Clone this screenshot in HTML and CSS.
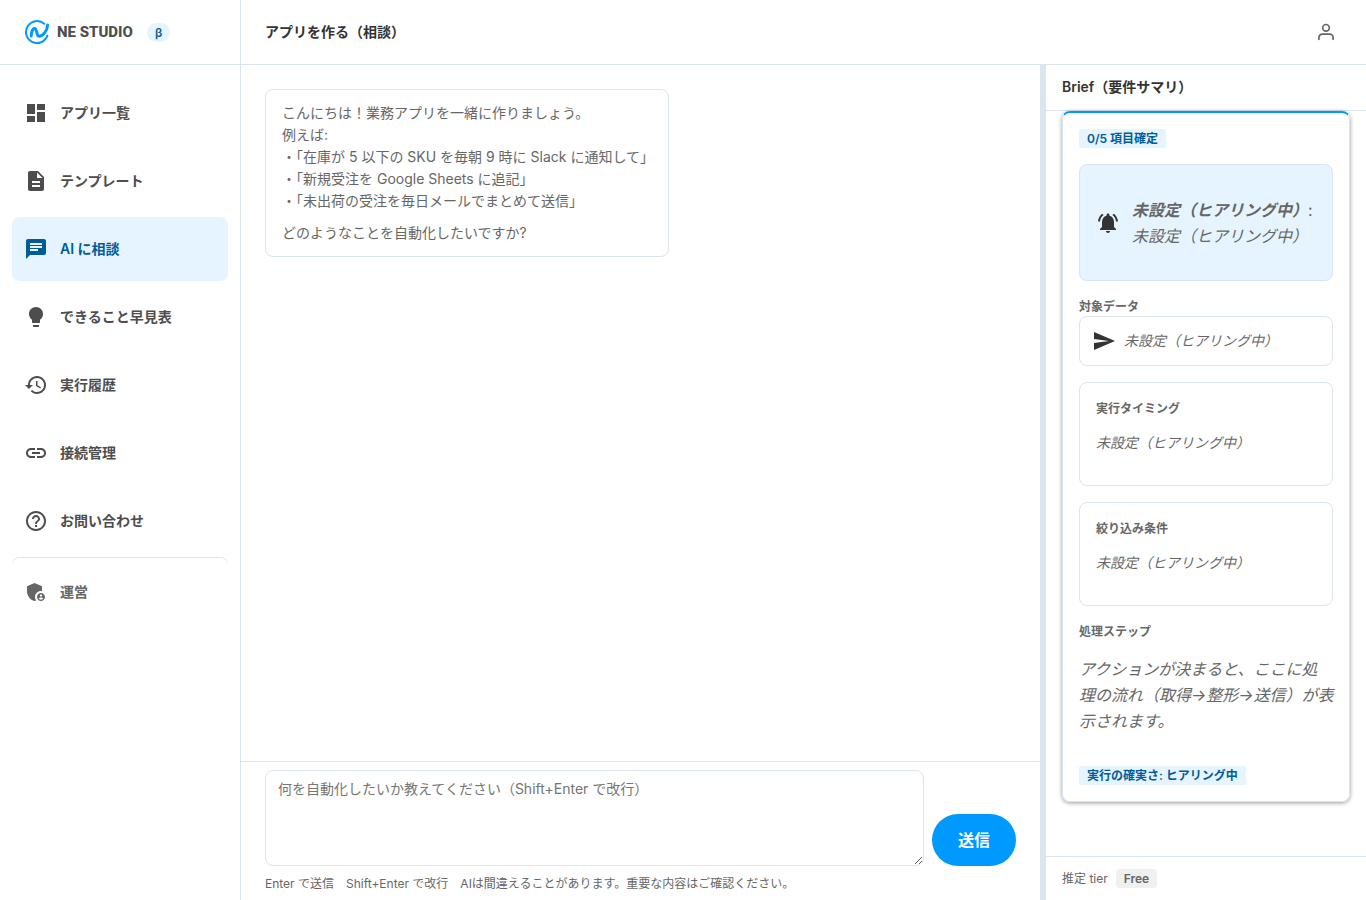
FILE: index.html
```html
<!DOCTYPE html>
<html lang="ja">
<head>
<meta charset="utf-8">
<meta name="viewport" content="width=device-width, initial-scale=1">
<title>NE STUDIO</title>
<link rel="stylesheet" href="styles.css">
</head>
<body>
<div class="app">
  <aside class="sidebar">
    <div class="brand">
      <svg class="brand-mark" viewBox="-1 -1 26 26" aria-hidden="true">
        <path d="M19.300 3.800A11 11 0 1 0 22.400 15.700" />
        <path class="brand-wave" d="M6.200 16C6.200 12.500 7.600 8.400 9.600 8.400C12.400 8.400 11 16.300 14.200 16.300C17.600 16.300 22.300 11 22.600 5" />
      </svg>
      <span class="brand-name">NE STUDIO</span>
      <span class="beta">β</span>
    </div>
    <nav class="nav">
      <a class="nav-item" href="#"><svg class="icon" viewBox="0 0 24 24"><path d="M3 13h8V3H3v10zm0 8h8v-6H3v6zm10 0h8V11h-8v10zm0-18v6h8V3h-8z"/></svg>アプリ一覧</a>
      <a class="nav-item" href="#"><svg class="icon" viewBox="0 0 24 24"><path d="M14 2H6c-1.100 0-2 .9-2 2v16c0 1.100.9 2 2 2h12c1.100 0 2-.9 2-2V8l-6-6zm2 16H8v-2h8v2zm0-4H8v-2h8v2zm-3-5V3.500L18.500 9H13z"/></svg>テンプレート</a>
      <a class="nav-item nav-active" href="#" aria-current="page"><svg class="icon" viewBox="0 0 24 24"><path d="M20 2H4c-1.100 0-2 .9-2 2v18l4-4h14c1.100 0 2-.9 2-2V4c0-1.100-.9-2-2-2zM6 9h12v2H6V9zm8 5H6v-2h8v2zm4-6H6V6h12v2z"/></svg>AI に相談</a>
      <a class="nav-item" href="#"><svg class="icon" viewBox="0 0 24 24"><path d="M9 21c0 .55.45 1 1 1h4c.55 0 1-.45 1-1v-1H9v1zm3-19C8.140 2 5 5.140 5 9c0 2.380 1.190 4.470 3 5.740V17c0 .55.45 1 1 1h6c.55 0 1-.45 1-1v-2.260c1.810-1.270 3-3.360 3-5.740 0-3.860-3.140-7-7-7z"/></svg>できること早見表</a>
      <a class="nav-item" href="#"><svg class="icon" viewBox="0 0 24 24"><path d="M13 3c-4.970 0-9 4.030-9 9H1l3.890 3.890.07.14L9 12H6c0-3.870 3.130-7 7-7s7 3.130 7 7-3.130 7-7 7c-1.930 0-3.680-.79-4.940-2.060l-1.420 1.420C8.270 19.990 10.510 21 13 21c4.970 0 9-4.030 9-9s-4.030-9-9-9zm-1 5v5l4.280 2.540.72-1.210-3.500-2.080V8H12z"/></svg>実行履歴</a>
      <a class="nav-item" href="#"><svg class="icon" viewBox="0 0 24 24"><path d="M3.900 12c0-1.710 1.390-3.100 3.100-3.100h4V7H7c-2.760 0-5 2.240-5 5s2.240 5 5 5h4v-1.900H7c-1.710 0-3.100-1.390-3.100-3.100zM8 13h8v-2H8v2zm9-6h-4v1.900h4c1.710 0 3.100 1.390 3.100 3.100s-1.390 3.100-3.100 3.100h-4V17h4c2.760 0 5-2.240 5-5s-2.240-5-5-5z"/></svg>接続管理</a>
      <a class="nav-item" href="#"><svg class="icon" viewBox="0 0 24 24"><path d="M11 18h2v-2h-2v2zm1-16C6.480 2 2 6.480 2 12s4.480 10 10 10 10-4.480 10-10S17.520 2 12 2zm0 18c-4.410 0-8-3.590-8-8s3.590-8 8-8 8 3.590 8 8-3.590 8-8 8zm0-14c-2.210 0-4 1.790-4 4h2c0-1.100.9-2 2-2s2 .9 2 2c0 2-3 1.750-3 5h2c0-2.250 3-2.500 3-5 0-2.210-1.790-4-4-4z"/></svg>お問い合わせ</a>
      <a class="nav-item nav-admin" href="#"><svg class="icon" viewBox="0 0 24 24"><path d="M17 11c.34 0 .67.04 1 .09V6.270L10.500 3 3 6.270v4.910c0 4.540 3.200 8.790 7.500 9.820.55-.13 1.080-.32 1.600-.55-.69-.98-1.100-2.170-1.100-3.450 0-3.310 2.690-6 6-6z"/><path fill-rule="evenodd" d="M17 13c-2.210 0-4 1.790-4 4s1.790 4 4 4 4-1.790 4-4-1.790-4-4-4zm0 1.380c.62 0 1.120.51 1.120 1.120s-.51 1.120-1.120 1.120-1.120-.51-1.120-1.120.5-1.120 1.120-1.120zm0 5.370c-.93 0-1.740-.46-2.240-1.170.05-.72 1.510-1.080 2.240-1.080s2.190.36 2.240 1.080c-.5.71-1.310 1.170-2.240 1.170z"/></svg>運営</a>
    </nav>
  </aside>

  <div class="content">
    <header class="topbar">
      <h1 class="page-title">アプリを作る（相談）</h1>
      <button class="account" type="button" aria-label="アカウント">
        <svg class="account-icon" viewBox="0 0 24 24"><circle cx="12" cy="7" r="4"/><path d="M3.500 21v-2.500a4 4 0 0 1 4-4h9a4 4 0 0 1 4 4V21"/></svg>
      </button>
    </header>
    <div class="workspace">
      <main class="chat">
        <div class="messages">
          <div class="bubble">
            <p>こんにちは！業務アプリを一緒に作りましょう。<br>例えば:<br>・「在庫が 5 以下の SKU を毎朝 9 時に Slack に通知して」<br>・「新規受注を Google Sheets に追記」<br>・「未出荷の受注を毎日メールでまとめて送信」</p>
            <p>どのようなことを自動化したいですか?</p>
          </div>
        </div>
        <form class="composer">
          <div class="composer-row">
            <textarea class="composer-input" aria-label="メッセージ" placeholder="何を自動化したいか教えてください（Shift+Enter で改行）"></textarea>
            <button class="send" type="button">送信</button>
          </div>
          <p class="hint">Enter で送信　Shift+Enter で改行　AIは間違えることがあります。重要な内容はご確認ください。</p>
        </form>
      </main>

      <aside class="brief">
        <h2 class="brief-title">Brief（要件サマリ）</h2>
        <div class="brief-body">
          <section class="summary">
            <span class="tag">0/5 項目確定</span>
            <div class="trigger">
              <svg class="icon" viewBox="0 0 24 24"><path d="M7.580 4.080L6.150 2.650C3.750 4.480 2.170 7.300 2.030 10.500h2c.15-2.650 1.510-4.970 3.550-6.420zm12.390 6.420h2c-.15-3.200-1.730-6.020-4.120-7.850l-1.420 1.430c2.020 1.450 3.390 3.770 3.540 6.420zM18 11c0-3.070-1.640-5.640-4.500-6.320V4c0-.83-.67-1.500-1.500-1.500s-1.500.67-1.500 1.500v.68C7.630 5.360 6 7.920 6 11v5l-2 2v1h16v-1l-2-2v-5zm-6 11c.14 0 .27-.01.4-.04.65-.14 1.180-.58 1.440-1.180.1-.24.15-.5.15-.78h-4c.01 1.100.9 2 2.010 2z"/></svg>
              <p class="trigger-text"><em><strong>未設定（ヒアリング中）</strong></em>:<br><em>未設定（ヒアリング中）</em></p>
            </div>
            <div class="target">
              <h3 class="label">対象データ</h3>
              <div class="target-box">
                <svg class="icon" viewBox="0 0 24 24"><path d="M2.010 21L23 12 2.010 3 2 10l15 2-15 2z"/></svg>
                <em>未設定（ヒアリング中）</em>
              </div>
            </div>
            <div class="field">
              <h3 class="label">実行タイミング</h3>
              <em>未設定（ヒアリング中）</em>
            </div>
            <div class="field">
              <h3 class="label">絞り込み条件</h3>
              <em>未設定（ヒアリング中）</em>
            </div>
            <div class="steps">
              <h3 class="label">処理ステップ</h3>
              <p class="steps-text">アクションが決まると、ここに処<br>理の流れ（取得→整形→送信）が表<br>示されます。</p>
            </div>
            <span class="tag">実行の確実さ: ヒアリング中</span>
          </section>
        </div>
        <footer class="tier">推定 tier<span class="tier-badge">Free</span></footer>
      </aside>
    </div>
  </div>
</div>
</body>
</html>
```
FILE: styles.css
```css
:root {
  --line: #dce5ed;
  --text: #333;
  --muted: #666;
  --blue: #0099ff;
  --blue-dark: #005c99;
  --blue-pale: #e5f4ff;
}

* { box-sizing: border-box; }

body, h1, h2, h3, p { margin: 0; }

body {
  font-family: Inter, "Noto Sans CJK JP", sans-serif;
  font-size: 14px;
  line-height: 22px;
  color: var(--text);
  background: #fff;
}

button, textarea { font: inherit; }

.app { display: flex; height: 100vh; }

.icon { width: 24px; height: 24px; flex: none; fill: currentColor; }

/* Sidebar */
.sidebar { flex: none; width: 241px; border-right: 1px solid var(--line); }

.brand {
  display: flex;
  align-items: center;
  height: 65px;
  padding: 0 24px;
  border-bottom: 1px solid var(--line);
}

.brand-mark {
  width: 26px;
  height: 26px;
  fill: none;
  stroke: var(--blue);
  stroke-width: 2;
  stroke-linecap: round;
}

.brand-wave { stroke-width: 3; }

.brand-name {
  margin-left: 7px;
  font-family: Roboto, sans-serif;
  font-size: 15px;
  font-weight: 800;
  color: #4d4d4d;
}

.beta {
  margin-left: 14px;
  padding: 0 8px;
  border-radius: 10px;
  font-size: 12px;
  line-height: 19px;
  font-weight: 600;
  color: var(--blue-dark);
  background: var(--blue-pale);
}

.nav { display: flex; flex-direction: column; gap: 4px; padding: 16px 12px; }

.nav-item {
  display: flex;
  align-items: center;
  gap: 12px;
  height: 64px;
  padding: 0 12px;
  border-radius: 8px;
  font-weight: 600;
  color: #4d4d4d;
  text-decoration: none;
}

.nav-active { color: var(--blue-dark); background: var(--blue-pale); }

.nav-admin {
  padding-top: 5px;
  border-top: 1px solid var(--line);
  color: var(--muted);
}

/* Header */
.content { display: flex; flex: 1; flex-direction: column; min-width: 0; }

.topbar {
  display: flex;
  flex: none;
  align-items: center;
  justify-content: space-between;
  height: 65px;
  padding: 0 24px;
  border-bottom: 1px solid var(--line);
}

.page-title { font-size: 14px; font-weight: 600; }

.account {
  display: flex;
  padding: 6px;
  border: 0;
  color: var(--muted);
  background: none;
}

.account-icon {
  width: 20px;
  height: 20px;
  fill: none;
  stroke: currentColor;
  stroke-width: 2;
  stroke-linecap: round;
}

.workspace { display: flex; flex: 1; min-height: 0; }

/* Chat */
.chat { display: flex; flex: 1; flex-direction: column; min-width: 0; }

.messages { flex: 1; padding: 24px; }

.bubble {
  display: flex;
  flex-direction: column;
  gap: 10px;
  width: fit-content;
  padding: 12px 14px 12px 16px;
  border: 1px solid var(--line);
  border-radius: 8px;
  color: var(--muted);
}

.composer { padding: 8px 24px 5px; border-top: 1px solid var(--line); }

.composer-row { display: flex; align-items: flex-end; gap: 8px; }

.composer-input {
  flex: 1;
  height: 96px;
  padding: 7px 12px;
  border: 1px solid var(--line);
  border-radius: 8px;
  resize: vertical;
}

.composer-input::placeholder { color: #757575; }

.send {
  height: 52px;
  padding: 0 26px;
  border: 0;
  border-radius: 26px;
  font-size: 16px;
  font-weight: 700;
  color: #fff;
  background: var(--blue);
}

.hint { padding-top: 7px; font-size: 12px; color: var(--muted); }

/* Brief panel */
.brief {
  display: flex;
  flex: none;
  flex-direction: column;
  width: 326px;
  border-left: 6px solid var(--line);
}

.brief-title {
  flex: none;
  padding: 11px 16px 12px;
  border-bottom: 1px solid var(--line);
  font-size: 14px;
  font-weight: 600;
}

.brief-body { flex: 1; padding: 0 16px; }

.summary {
  display: flex;
  flex-direction: column;
  align-items: stretch;
  gap: 16px;
  padding: 16px;
  border: 1px solid var(--line);
  border-top: 2px solid var(--blue);
  border-radius: 8px;
  color: var(--muted);
  box-shadow: 0 1px 4px rgba(0, 0, 0, 0.4);
}

.tag {
  align-self: flex-start;
  padding: 0 8px;
  border-radius: 2px;
  font-size: 12px;
  line-height: 19px;
  font-weight: 600;
  color: var(--blue-dark);
  background: var(--blue-pale);
}

.trigger {
  display: flex;
  align-items: center;
  gap: 12px;
  height: 117px;
  padding: 0 16px;
  border: 1px solid var(--line);
  border-radius: 8px;
  background: var(--blue-pale);
}

.trigger .icon, .target-box .icon { color: var(--text); }

.trigger-text, .steps-text {
  font-size: 16px;
  line-height: 26px;
  white-space: nowrap;
}

.label { font-size: 12px; line-height: 19px; font-weight: 600; }

.target-box {
  display: flex;
  align-items: center;
  gap: 8px;
  height: 50px;
  padding: 0 12px;
  border: 1px solid var(--line);
  border-radius: 8px;
}

.field {
  display: flex;
  flex-direction: column;
  gap: 14px;
  height: 104px;
  padding: 16px;
  border: 1px solid var(--line);
  border-radius: 8px;
}

.steps-text { padding: 15px 0 16px; font-style: italic; }

.tier {
  display: flex;
  align-items: center;
  gap: 8px;
  height: 44px;
  padding: 0 16px;
  border-top: 1px solid var(--line);
  font-size: 12px;
  color: var(--muted);
}

.tier-badge {
  padding: 0 8px;
  border-radius: 4px;
  line-height: 19px;
  font-weight: 600;
  background: #f0f0f0;
}
```
